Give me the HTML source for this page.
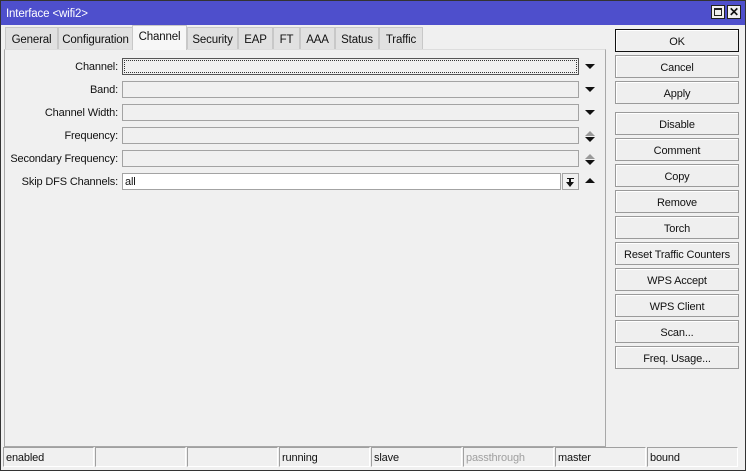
<!DOCTYPE html>
<html><head><style>
*{box-sizing:border-box;margin:0;padding:0}
body{width:746px;height:471px;background:#f0f0f0;font-family:"Liberation Sans",sans-serif;font-size:11px;letter-spacing:-0.15px;color:#111;position:relative;overflow:hidden}
.a{position:absolute}
#win{left:0;top:0;width:746px;height:471px;border:1px solid #333}
#title{left:1px;top:1px;width:744px;height:24px;background:#4e4fcc;color:#fff;font-size:11.5px;padding:7px 0 0 5px}
.wb{top:5px;width:14px;height:14px;background:#f0f0f0;border:1px solid #222}
.tab{top:27px;height:22px;background:#e1e1e1;border:1px solid #c8c8c8;border-bottom:none;text-align:center;padding-top:6px;font-size:11.5px}
.tab.on{top:25px;height:25px;background:#f7f7f7;padding-top:5px;z-index:2}
#panel{left:4px;top:49px;width:602px;height:398px;border:1px solid #a8a8a8;border-top:1px solid #ddd;background:#f0f0f0}
.lab{right:628px;text-align:right;width:120px;white-space:nowrap}
.f{left:122px;width:457px;height:17px;border:1px solid #a3a3a3;background:#f0f0f0}
.btn{left:615px;width:124px;height:23px;border:1px solid #9a9a9a;background:#efefef;text-align:center;padding-top:6px;box-shadow:inset 1px 1px #fff}
.sc{top:447px;height:20px;width:91px;border:1px solid #a0a0a0;border-right-color:#fff;border-bottom-color:#fff;padding:4px 0 0 2px}
.dn{width:0;height:0;border-left:5px solid transparent;border-right:5px solid transparent;border-top:5px solid #111}
.up{width:0;height:0;border-left:5px solid transparent;border-right:5px solid transparent;border-bottom:5px solid #111}
</style></head><body>
<div id="win" class="a"></div>
<div id="title" class="a">Interface &lt;wifi2&gt;</div>
<div class="a wb" style="left:711px"><div class="a" style="left:2px;top:2px;width:8px;height:8px;border:1px solid #222;border-top-width:2px"></div></div>
<div class="a wb" style="left:727px;font-size:12px;font-weight:bold;line-height:12px;text-align:center">✕</div>

<div class="a tab" style="left:5px;width:53px">General</div>
<div class="a tab" style="left:58px;width:75px">Configuration</div>
<div class="a tab on" style="left:132px;width:55px">Channel</div>
<div class="a tab" style="left:187px;width:51px">Security</div>
<div class="a tab" style="left:238px;width:35px">EAP</div>
<div class="a tab" style="left:273px;width:27px">FT</div>
<div class="a tab" style="left:300px;width:35px">AAA</div>
<div class="a tab" style="left:335px;width:44px">Status</div>
<div class="a tab" style="left:379px;width:44px">Traffic</div>

<div id="panel" class="a"></div>

<div class="a lab" style="top:61px">Channel:</div>
<div class="a f" style="top:58px;border:1px solid #555;outline:1px dotted #333;outline-offset:-3px"></div>
<div class="a dn" style="left:585px;top:64px"></div>
<div class="a lab" style="top:84px">Band:</div>
<div class="a f" style="top:81px"></div>
<div class="a dn" style="left:585px;top:87px"></div>
<div class="a lab" style="top:107px">Channel Width:</div>
<div class="a f" style="top:104px"></div>
<div class="a dn" style="left:585px;top:110px"></div>
<div class="a lab" style="top:130px">Frequency:</div>
<div class="a f" style="top:127px"></div>
<div class="a up" style="left:585px;top:131px;border-bottom-color:#999"></div>
<div class="a dn" style="left:585px;top:137px"></div>
<div class="a lab" style="top:153px">Secondary Frequency:</div>
<div class="a f" style="top:150px"></div>
<div class="a up" style="left:585px;top:154px;border-bottom-color:#999"></div>
<div class="a dn" style="left:585px;top:160px"></div>
<div class="a lab" style="top:176px">Skip DFS Channels:</div>
<div class="a f" style="top:173px;width:439px;background:#fff;padding:2px 0 0 2px">all</div>
<div class="a" style="left:562px;top:173px;width:17px;height:17px;border:1px solid #a3a3a3;background:#f0f0f0"><div class="a" style="left:4px;top:4px;width:7px;height:1px;background:#111"></div><div class="a dn" style="left:3px;top:8px;border-left-width:4px;border-right-width:4px"></div><div class="a" style="left:6px;top:5px;width:2px;height:3px;background:#111"></div></div>
<div class="a up" style="left:585px;top:178px"></div>

<div class="a btn" style="top:29px;border:1px solid #111">OK</div>
<div class="a btn" style="top:55px">Cancel</div>
<div class="a btn" style="top:81px">Apply</div>
<div class="a btn" style="top:112px">Disable</div>
<div class="a btn" style="top:138px">Comment</div>
<div class="a btn" style="top:164px">Copy</div>
<div class="a btn" style="top:190px">Remove</div>
<div class="a btn" style="top:216px">Torch</div>
<div class="a btn" style="top:242px">Reset Traffic Counters</div>
<div class="a btn" style="top:268px">WPS Accept</div>
<div class="a btn" style="top:294px">WPS Client</div>
<div class="a btn" style="top:320px">Scan...</div>
<div class="a btn" style="top:346px">Freq. Usage...</div>

<div class="a sc" style="left:3px">enabled</div>
<div class="a sc" style="left:95px"></div>
<div class="a sc" style="left:187px"></div>
<div class="a sc" style="left:279px">running</div>
<div class="a sc" style="left:371px">slave</div>
<div class="a sc" style="left:463px;color:#a0a0a0">passthrough</div>
<div class="a sc" style="left:555px">master</div>
<div class="a sc" style="left:647px">bound</div>
</body></html>
